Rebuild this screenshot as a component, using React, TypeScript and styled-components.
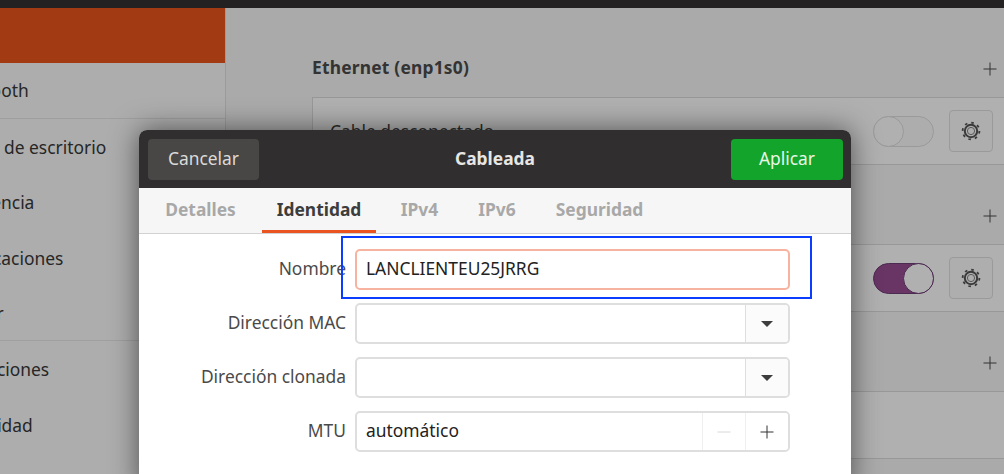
import React from "react";
import styled, { createGlobalStyle } from "styled-components";

const GlobalStyle = createGlobalStyle`
  html, body {
    margin: 0;
    padding: 0;
    background: #aaaaaa;
  }
  * {
    box-sizing: border-box;
  }
`;

const Screen = styled.div`
  position: relative;
  width: 1004px;
  height: 474px;
  overflow: hidden;
  font-family: "Noto Sans", "Open Sans", sans-serif;
  font-size: 17.4px;
  color: #2e2e2e;
  background: #aaaaaa;
`;

const TopBar = styled.div`
  height: 8px;
  background: #232122;
`;

const Main = styled.div`
  display: flex;
  height: 466px;
`;

const Sidebar = styled.div`
  flex: 0 0 226px;
  background: #adadad;
  border-right: 1px solid #9b9b9b;
  overflow: hidden;
`;

const SideRow = styled.div<{ $selected?: boolean; $divider?: boolean }>`
  display: flex;
  align-items: center;
  height: ${(p) => (p.$selected ? "55px" : "55.7px")};
  white-space: nowrap;
  background: ${(p) => (p.$selected ? "#a23a14" : "transparent")};
  border-bottom: ${(p) => (p.$divider ? "1px solid #9f9f9f" : "none")};
`;

const SideLabel = styled.span`
  margin-left: -52px;
  color: #262626;
`;

const Content = styled.div`
  flex: 1;
  min-width: 0;
  overflow: hidden;
  padding: 32px 0 0 86px;
`;

const Section = styled.section`
  margin-bottom: 22px;
`;

const SectionHeader = styled.div`
  display: flex;
  align-items: center;
  justify-content: space-between;
  height: 57px;
  width: 685px;
`;

const SectionTitle = styled.h3`
  margin: -3px 0 0;
  font-size: 17.4px;
  font-weight: 700;
  letter-spacing: 0.2px;
  color: #333;
`;

const IconMark = styled.svg`
  display: block;
  flex: none;
`;

const Panel = styled.div`
  display: flex;
  align-items: center;
  justify-content: space-between;
  width: 700px;
  height: 68px;
  padding: 0 18px 0 17px;
  background: #b0b0b0;
  border: 1px solid #989898;
`;

const PanelText = styled.span`
  color: #2b2b2b;
`;

const Controls = styled.div`
  display: flex;
  align-items: center;
  gap: 15px;
`;

const Toggle = styled.div<{ $on?: boolean }>`
  position: relative;
  width: 61px;
  height: 31px;
  border-radius: 16px;
  border: 1px solid ${(p) => (p.$on ? "#4d2a52" : "#9a9a9a")};
  background: ${(p) => (p.$on ? "#683565" : "#adadad")};
`;

const Knob = styled.div<{ $on?: boolean }>`
  position: absolute;
  top: -1px;
  left: ${(p) => (p.$on ? "29px" : "-1px")};
  width: 31px;
  height: 31px;
  border-radius: 50%;
  border: 1px solid ${(p) => (p.$on ? "#4d2a52" : "#9a9a9a")};
  background: #b0b0b0;
`;

const GearButton = styled.div`
  display: flex;
  align-items: center;
  justify-content: center;
  width: 44px;
  height: 42px;
  border: 1px solid #9a9a9a;
  border-radius: 4px;
  background: #aeaeae;
`;

const Dialog = styled.div`
  position: absolute;
  left: 139px;
  top: 130px;
  width: 712px;
  height: 360px;
  border-radius: 8px 8px 0 0;
  overflow: hidden;
  background: #fff;
  box-shadow: 0 0 28px rgba(0, 0, 0, 0.55);
`;

const DialogHeader = styled.header`
  display: flex;
  align-items: center;
  justify-content: space-between;
  height: 58px;
  padding: 0 8px 0 9px;
  background: #302e2e;
`;

const HeaderButton = styled.button<{ $primary?: boolean }>`
  width: ${(p) => (p.$primary ? "112px" : "111px")};
  height: 41px;
  padding: 0 0 3px;
  border: none;
  border-radius: 4px;
  font: inherit;
  color: ${(p) => (p.$primary ? "#e8f6e6" : "#dcdad8")};
  background: ${(p) => (p.$primary ? "#12a42b" : "#484745")};
`;

const DialogTitle = styled.div`
  margin-top: -3px;
  font-weight: 700;
  color: #e8e6e3;
`;

const TabBar = styled.nav`
  display: flex;
  gap: 9.5px;
  height: 46px;
  padding-left: 9.5px;
  background: #f6f6f6;
  border-bottom: 1px solid #d2d2d2;
`;

const Tab = styled.div<{ $active?: boolean; $width: number }>`
  display: flex;
  align-items: center;
  justify-content: center;
  width: ${(p) => p.$width}px;
  height: 45px;
  font-weight: 700;
  color: ${(p) => (p.$active ? "#3d3d3d" : "#a8a8a8")};
  border-bottom: 3px solid ${(p) => (p.$active ? "#e95420" : "transparent")};
`;

const Form = styled.div`
  display: grid;
  grid-template-columns: 207px 435px;
  column-gap: 9px;
  row-gap: 13px;
  padding-top: 15px;
  align-items: center;
`;

const FieldLabel = styled.label`
  margin-top: -3px;
  text-align: right;
  color: #4a4a4a;
`;

const Field = styled.div<{ $focused?: boolean }>`
  display: flex;
  align-items: stretch;
  height: 41px;
  border: 2px solid ${(p) => (p.$focused ? "#f8b3a0" : "#dedede")};
  border-radius: 5px;
  overflow: hidden;
  background: #fff;
`;

const FieldValue = styled.div`
  flex: 1;
  display: flex;
  align-items: center;
  padding: 0 0 3px 9px;
  color: #222;
`;

const FieldButton = styled.div<{ $muted?: boolean }>`
  flex: 0 0 43px;
  display: flex;
  align-items: center;
  justify-content: center;
  border-left: 1px solid ${(p) => (p.$muted ? "#efefef" : "#dedede")};
  background: ${(p) => (p.$muted ? "#ffffff" : "#fbfbfb")};
`;

const Caret = styled.div`
  width: 0;
  height: 0;
  border-left: 6px solid transparent;
  border-right: 6px solid transparent;
  border-top: 6px solid #3d3d3d;
`;

const Annotation = styled.div`
  position: absolute;
  left: 341px;
  top: 236px;
  width: 471px;
  height: 63px;
  border: 2px solid #0b3dff;
  pointer-events: none;
`;

const Plus = () => (
  <IconMark width="14" height="14" viewBox="0 0 14 14">
    <path d="M7 0.5v13M0.5 7h13" stroke="#333" strokeWidth="1" fill="none" />
  </IconMark>
);

const Minus = () => (
  <IconMark width="14" height="14" viewBox="0 0 14 14">
    <path d="M0.5 7h13" stroke="#d8d8d8" strokeWidth="1" fill="none" />
  </IconMark>
);

const Gear = () => (
  <svg width="20" height="20" viewBox="0 0 20 20">
    <circle cx="10" cy="10" r="8.4" fill="none" stroke="#3a3a3a" strokeWidth="1.8" strokeDasharray="2.6 3.99" />
    <circle cx="10" cy="10" r="6.2" fill="none" stroke="#3a3a3a" strokeWidth="2" />
    <circle cx="10" cy="10" r="3.6" fill="none" stroke="#5a5a5a" strokeWidth="1" />
  </svg>
);

const sideItems = [
  { label: "Wi-Fi y Red", selected: true },
  { label: "Bluetooth", divider: true },
  { label: "Fondo de escritorio" },
  { label: "Apariencia" },
  { label: "Notificaciones" },
  { label: "Buscar", divider: true },
  { label: "Aplicaciones" },
  { label: "Privacidad" },
  { label: "Cuentas en línea" },
];

const tabs = [
  { label: "Detalles", width: 104 },
  { label: "Identidad", width: 114 },
  { label: "IPv4", width: 68 },
  { label: "IPv6", width: 68 },
  { label: "Seguridad", width: 118 },
];

export default function App() {
  return (
    <Screen>
      <GlobalStyle />
      <TopBar />
      <Main>
        <Sidebar>
          {sideItems.map((item) => (
            <SideRow key={item.label} $selected={item.selected} $divider={item.divider}>
              {!item.selected && <SideLabel>{item.label}</SideLabel>}
            </SideRow>
          ))}
        </Sidebar>
        <Content>
          <Section>
            <SectionHeader>
              <SectionTitle>Ethernet (enp1s0)</SectionTitle>
              <Plus />
            </SectionHeader>
            <Panel>
              <PanelText>Cable desconectado</PanelText>
              <Controls>
                <Toggle>
                  <Knob />
                </Toggle>
                <GearButton>
                  <Gear />
                </GearButton>
              </Controls>
            </Panel>
          </Section>
          <Section>
            <SectionHeader>
              <SectionTitle />
              <Plus />
            </SectionHeader>
            <Panel>
              <PanelText />
              <Controls>
                <Toggle $on>
                  <Knob $on />
                </Toggle>
                <GearButton>
                  <Gear />
                </GearButton>
              </Controls>
            </Panel>
          </Section>
          <Section>
            <SectionHeader>
              <SectionTitle />
              <Plus />
            </SectionHeader>
            <Panel />
          </Section>
        </Content>
      </Main>

      <Dialog>
        <DialogHeader>
          <HeaderButton>Cancelar</HeaderButton>
          <DialogTitle>Cableada</DialogTitle>
          <HeaderButton $primary>Aplicar</HeaderButton>
        </DialogHeader>
        <TabBar>
          {tabs.map((tab) => (
            <Tab key={tab.label} $active={tab.label === "Identidad"} $width={tab.width}>
              {tab.label}
            </Tab>
          ))}
        </TabBar>
        <Form>
          <FieldLabel>Nombre</FieldLabel>
          <Field $focused>
            <FieldValue>LANCLIENTEU25JRRG</FieldValue>
          </Field>
          <FieldLabel>Dirección MAC</FieldLabel>
          <Field>
            <FieldValue />
            <FieldButton>
              <Caret />
            </FieldButton>
          </Field>
          <FieldLabel>Dirección clonada</FieldLabel>
          <Field>
            <FieldValue />
            <FieldButton>
              <Caret />
            </FieldButton>
          </Field>
          <FieldLabel>MTU</FieldLabel>
          <Field>
            <FieldValue>automático</FieldValue>
            <FieldButton $muted>
              <Minus />
            </FieldButton>
            <FieldButton $muted>
              <Plus />
            </FieldButton>
          </Field>
        </Form>
      </Dialog>
      <Annotation />
    </Screen>
  );
}
